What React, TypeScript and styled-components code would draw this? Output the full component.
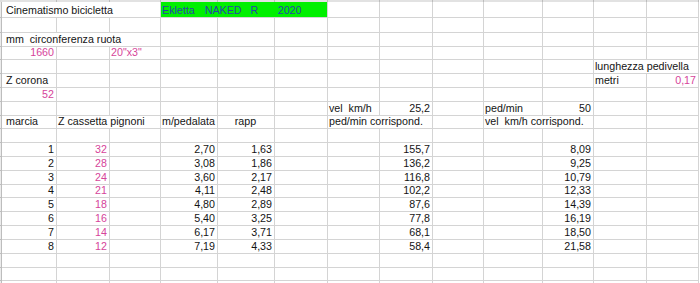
import React from "react";
import styled, { createGlobalStyle } from "styled-components";

const LINE = "#d4d4d4";
const FRAME = "#bdbdbd";
const INK = "#141414";
const PINK = "#d6449a";
const BAND_GREEN = "#00f000";
const BAND_INK = "#2346a8";

const COL_WIDTHS = [55, 53, 51, 57, 57, 53, 52, 53, 51, 59, 51, 53, 52];
const ROW_HEIGHTS = [16, 15, 14, 13, 14, 14, 14, 14, 13, 14, 14, 14, 14, 13, 14, 14, 14, 14, 14, 13, 14];

type Align = "left" | "right" | "center";
type Tone = "ink" | "pink";

interface CellDef {
  col: number;
  span?: number;
  text?: string;
  align?: Align;
  tone?: Tone;
  band?: { word: string; gap: number }[];
}

const GEARS: [string, string, string, string, string, string][] = [
  ["1", "32", "2,70", "1,63", "155,7", "8,09"],
  ["2", "28", "3,08", "1,86", "136,2", "9,25"],
  ["3", "24", "3,60", "2,17", "116,8", "10,79"],
  ["4", "21", "4,11", "2,48", "102,2", "12,33"],
  ["5", "18", "4,80", "2,89", "87,6", "14,39"],
  ["6", "16", "5,40", "3,25", "77,8", "16,19"],
  ["7", "14", "6,17", "3,71", "68,1", "18,50"],
  ["8", "12", "7,19", "4,33", "58,4", "21,58"],
];

const SHEET: Record<number, CellDef[]> = {
  1: [
    { col: 0, span: 3, text: "Cinematismo bicicletta" },
    {
      col: 3,
      span: 3,
      band: [
        { word: "Ekletta", gap: 1 },
        { word: "NAKED", gap: 10 },
        { word: "R", gap: 9 },
        { word: "2020", gap: 19.5 },
      ],
    },
  ],
  3: [{ col: 0, span: 3, text: "mm  circonferenza ruota" }],
  4: [
    { col: 0, text: "1660", align: "right", tone: "pink" },
    { col: 2, text: '20"x3"', tone: "pink" },
  ],
  5: [{ col: 11, span: 2, text: "lunghezza pedivella" }],
  6: [
    { col: 0, text: "Z corona" },
    { col: 11, text: "metri" },
    { col: 12, text: "0,17", align: "right", tone: "pink" },
  ],
  7: [{ col: 0, text: "52", align: "right", tone: "pink" }],
  8: [
    { col: 6, text: "vel  km/h" },
    { col: 7, text: "25,2", align: "right" },
    { col: 9, text: "ped/min" },
    { col: 10, text: "50", align: "right" },
  ],
  9: [
    { col: 0, text: "marcia" },
    { col: 1, span: 2, text: "Z cassetta pignoni" },
    { col: 3, text: "m/pedalata" },
    { col: 4, text: "rapp", align: "center" },
    { col: 6, span: 2, text: "ped/min corrispond." },
    { col: 9, span: 2, text: "vel  km/h corrispond." },
  ],
};

GEARS.forEach((g, i) => {
  SHEET[11 + i] = [
    { col: 0, text: g[0], align: "right" },
    { col: 1, text: g[1], align: "right", tone: "pink" },
    { col: 3, text: g[2], align: "right" },
    { col: 4, text: g[3], align: "right" },
    { col: 7, text: g[4], align: "right" },
    { col: 10, text: g[5], align: "right" },
  ];
});

const GlobalStyle = createGlobalStyle`
  html, body {
    margin: 0;
    padding: 0;
    background: #ffffff;
    overflow: hidden;
  }
  body {
    font-family: "Liberation Sans", Arial, sans-serif;
  }
`;

const Sheet = styled.div`
  display: grid;
  grid-template-columns: 2px ${COL_WIDTHS.map((w) => `${w}px`).join(" ")} 1fr;
  grid-template-rows: 2px ${ROW_HEIGHTS.map((h) => `${h}px`).join(" ")};
  width: 700px;
  height: 283px;
  overflow: hidden;
  background: #ffffff;
`;

const Corner = styled.div`
  background: #dedede;
`;

const ColHead = styled.div`
  box-sizing: border-box;
  background: #e2e2e2;
  border-right: 1px solid ${FRAME};
`;

const RowHead = styled.div`
  box-sizing: border-box;
  background: #ececec;
  border-right: 1px solid ${FRAME};
  border-bottom: 1px solid ${FRAME};
`;

const Cell = styled.div<{ $span: number; $align: Align; $tone: Tone; $first: boolean }>`
  grid-column: span ${(p) => p.$span};
  box-sizing: border-box;
  min-width: 0;
  border-right: 1px solid ${LINE};
  border-bottom: 1px solid ${LINE};
  display: flex;
  align-items: flex-end;
  justify-content: ${(p) =>
    p.$align === "right" ? "flex-end" : p.$align === "center" ? "center" : "flex-start"};
  padding: 0 2px 1px ${(p) => (p.$first ? 4 : 1)}px;
  font-family: "Liberation Sans", Arial, sans-serif;
  font-size: 10.7px;
  line-height: 12px;
  color: ${(p) => (p.$tone === "pink" ? PINK : INK)};
  white-space: pre;
`;

const Band = styled.div<{ $span: number }>`
  grid-column: span ${(p) => p.$span};
  box-sizing: border-box;
  background: ${BAND_GREEN};
  border-right: 1px solid ${LINE};
  border-bottom: 1px solid ${LINE};
  display: flex;
  align-items: flex-end;
  padding: 0 0 1px 0;
  font-family: "Liberation Sans", Arial, sans-serif;
  font-size: 10.7px;
  line-height: 12px;
  color: ${BAND_INK};
  white-space: pre;
`;

const BandWord = styled.span<{ $gap: number }>`
  margin-left: ${(p) => p.$gap}px;
`;

function buildRow(r: number): React.ReactNode[] {
  const defs = SHEET[r] ?? [];
  const out: React.ReactNode[] = [<RowHead key={`h${r}`} />];
  let c = 0;
  while (c < COL_WIDTHS.length) {
    const d = defs.find((x) => x.col === c);
    if (d && d.band) {
      out.push(
        <Band key={`${r}-${c}`} $span={d.span ?? 1}>
          {d.band.map((b) => (
            <BandWord key={b.word} $gap={b.gap}>
              {b.word}
            </BandWord>
          ))}
        </Band>
      );
      c += d.span ?? 1;
    } else if (d) {
      out.push(
        <Cell
          key={`${r}-${c}`}
          $span={d.span ?? 1}
          $align={d.align ?? "left"}
          $tone={d.tone ?? "ink"}
          $first={c === 0}
        >
          {d.text}
        </Cell>
      );
      c += d.span ?? 1;
    } else {
      out.push(<Cell key={`${r}-${c}`} $span={1} $align="left" $tone="ink" $first={c === 0} />);
      c += 1;
    }
  }
  out.push(<div key={`tail${r}`} />);
  return out;
}

export default function App() {
  return (
    <>
      <GlobalStyle />
      <Sheet>
        <Corner />
        {COL_WIDTHS.map((_, i) => (
          <ColHead key={`c${i}`} />
        ))}
        <div />
        {ROW_HEIGHTS.map((_, i) => buildRow(i + 1))}
      </Sheet>
    </>
  );
}
